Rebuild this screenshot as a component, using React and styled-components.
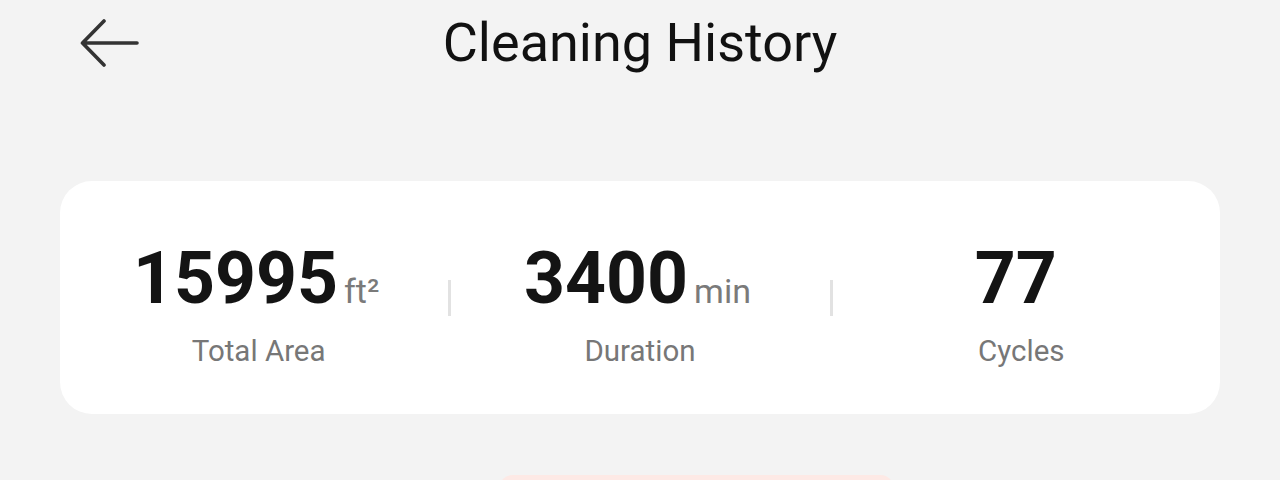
import styled, { createGlobalStyle } from "styled-components";

const GlobalStyle = createGlobalStyle`
  body {
    margin: 0;
    background: #f3f3f3;
    font-family: Roboto, "Noto Sans", sans-serif;
  }
`;

const stats = [
  { value: "15995", unit: "ft²", label: "Total Area" },
  { value: "3400", unit: "min", label: "Duration" },
  { value: "77", unit: "", label: "Cycles" },
];

export default function App() {
  return (
    <Page>
      <GlobalStyle />
      <Header>
        <BackButton aria-label="back">
          <svg width="60" height="60" viewBox="0 0 60 60" fill="none">
            <path
              d="M3 30H57M24 8L2.5 30L24 52"
              stroke="#333"
              strokeWidth="3.6"
              strokeLinecap="round"
              strokeLinejoin="round"
            />
          </svg>
        </BackButton>
        <Title>Cleaning History</Title>
        <span />
      </Header>

      <SummaryCard>
        {stats.map((s, i) => (
          <Cell key={s.label}>
            {i > 0 && <Divider />}
            <Stat>
              <ValueRow>
                <Value>{s.value}</Value>
                <Unit>{s.unit}</Unit>
              </ValueRow>
              <Label>{s.label}</Label>
            </Stat>
          </Cell>
        ))}
      </SummaryCard>

      <ActionButton />
    </Page>
  );
}

const Page = styled.div`
  display: flex;
  flex-direction: column;
  height: 480px;
  overflow: hidden;

  & > * {
    flex-shrink: 0;
  }
`;

const Header = styled.header`
  height: 86px;
  display: grid;
  grid-template-columns: 1fr auto 1fr;
  align-items: center;
  padding: 0 80px;
`;

const BackButton = styled.button`
  width: 60px;
  height: 60px;
  padding: 0;
  border: none;
  background: none;
  display: flex;
  align-items: center;
  justify-content: flex-start;
  cursor: pointer;
`;

const Title = styled.h1`
  margin: 0;
  font-size: 54px;
  font-weight: 400;
  line-height: 1;
  color: #111;
`;

const SummaryCard = styled.section`
  margin: 95px 60px 0;
  height: 233px;
  box-sizing: border-box;
  background: #fff;
  border-radius: 32px;
  padding: 0 8px;
  display: grid;
  grid-template-columns: repeat(3, 1fr);
`;

const Cell = styled.div`
  position: relative;
  display: flex;
  justify-content: center;
  padding-top: 62px;
`;

const Divider = styled.span`
  position: absolute;
  left: -1px;
  top: 99px;
  width: 3px;
  height: 36px;
  background: #e2e2e2;
`;

const Stat = styled.div`
  display: flex;
  flex-direction: column;
  align-items: center;
`;

const ValueRow = styled.div`
  display: flex;
  align-items: baseline;
  gap: 6px;
  padding-right: 5px;
`;

const Value = styled.span`
  font-size: 71.5px;
  font-weight: 700;
  line-height: 1;
  color: #141414;
`;

const Unit = styled.span`
  font-size: 34px;
  line-height: 1;
  color: #7a7a7a;
`;

const Label = styled.div`
  margin-top: 22px;
  font-size: 29.5px;
  line-height: 1;
  color: #777;
`;

const ActionButton = styled.button`
  align-self: flex-start;
  margin: 61px 0 0 500px;
  width: 393px;
  height: 80px;
  border: none;
  border-radius: 12px;
  background: #fde9e5;
`;
